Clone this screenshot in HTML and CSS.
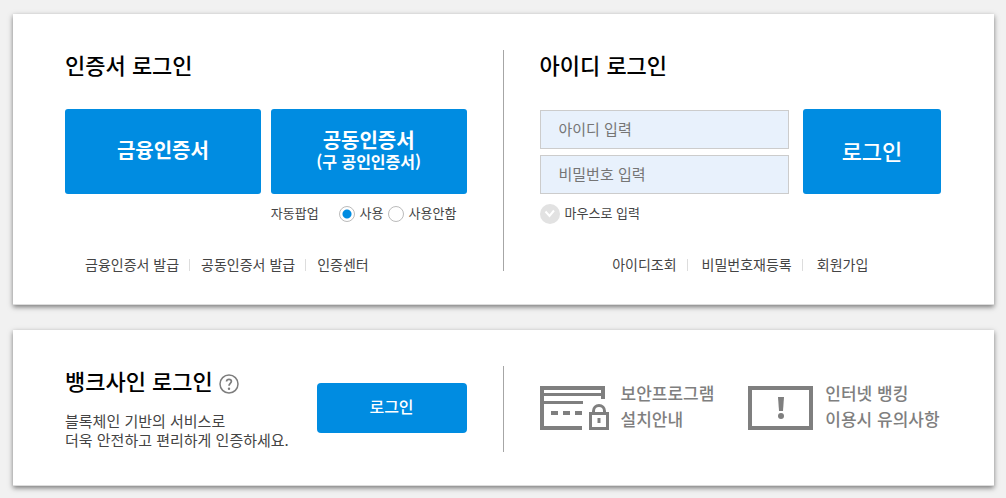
FILE: index.html
```html
<!DOCTYPE html>
<html lang="ko">
<head>
    <meta charset="UTF-8">
    <meta name="viewport" content="width=device-width, initial-scale=1.0">
    <title>로그인</title>
    <link rel="stylesheet" href="styles.css">
</head>
<body>
    <main>
        <div class="card">
            <section class="half">
                <h2>인증서 로그인</h2>
                <div class="cert-buttons">
                    <button type="button" class="btn cert">금융인증서</button>
                    <button type="button" class="btn cert">공동인증서<small>(구 공인인증서)</small></button>
                </div>
                <div class="option popup">
                    <span class="option-title">자동팝업</span>
                    <label><input type="radio" name="popup" checked>사용</label>
                    <label><input type="radio" name="popup">사용안함</label>
                </div>
                <ul class="links">
                    <li><a href="#">금융인증서 발급</a></li>
                    <li><a href="#">공동인증서 발급</a></li>
                    <li><a href="#">인증센터</a></li>
                </ul>
            </section>
            <section class="half">
                <h2>아이디 로그인</h2>
                <form>
                    <div class="login-form">
                        <div class="fields">
                            <input type="text" placeholder="아이디 입력" aria-label="아이디 입력">
                            <input type="password" placeholder="비밀번호 입력" aria-label="비밀번호 입력">
                        </div>
                        <button type="button" class="btn login">로그인</button>
                    </div>
                    <div class="option">
                        <label class="mouse">
                            <input type="checkbox">
                            <svg width="20" height="20" viewBox="0 0 20 20"><circle cx="10" cy="10" r="10" fill="#e2e2e2"/><path d="M5.500 7.500l4 4.500 4.500-5.500" fill="none" stroke="#fff" stroke-width="2"/></svg>
                            마우스로 입력
                        </label>
                    </div>
                </form>
                <ul class="links center">
                    <li><a href="#">아이디조회</a></li>
                    <li><a href="#">비밀번호재등록</a></li>
                    <li><a href="#">회원가입</a></li>
                </ul>
            </section>
        </div>

        <div class="card">
            <section class="half banksign">
                <div>
                    <h2>뱅크사인 로그인
                        <a href="#" class="help" aria-label="도움말">
                            <svg width="20" height="20" viewBox="0 0 20 20" fill="none" stroke="#7d7d7d"><circle cx="10" cy="10" r="9" stroke-width="1.5"/><path d="M7.5 7.5Q7.700 5.300 10 5.300t2.400 2c0 2-2.400 2-2.400 4.500" stroke-width="1.7"/><circle cx="10" cy="14.7" r="1.2" fill="#7d7d7d" stroke="none"/></svg>
                        </a>
                    </h2>
                    <p>블록체인 기반의 서비스로<br>더욱 안전하고 편리하게 인증하세요.</p>
                </div>
                <button type="button" class="btn bank">로그인</button>
            </section>
            <section class="half guides">
                <a href="#">
                    <svg width="69" height="44" viewBox="0 0 69 44" fill="none" stroke="#7f7f7f">
                        <path d="M42 42H2V2h61v11" stroke-width="4"/>
                        <path d="M2 8.500h61" stroke-width="3"/>
                        <path d="M2 16.500h41" stroke-width="3"/>
                        <path d="M11 27h7m5 0h7m5 0h7" stroke-width="4"/>
                        <path d="M53.500 27v-2a5.500 5.500 0 0 1 11 0v2M50.500 27.500h17v15h-17z" stroke-width="3"/>
                        <path d="M59 32v5" stroke-width="3"/>
                    </svg>
                    <span>보안프로그램<br>설치안내</span>
                </a>
                <a href="#">
                    <svg width="65" height="44" viewBox="0 0 65 44">
                        <path d="M2 2h61v40H2z" fill="none" stroke="#7f7f7f" stroke-width="4"/>
                        <path d="M30 11h6l-1 14h-4z" fill="#7f7f7f"/>
                        <circle cx="33" cy="30" r="3" fill="#7f7f7f"/>
                    </svg>
                    <span>인터넷 뱅킹<br>이용시 유의사항</span>
                </a>
            </section>
        </div>
    </main>
</body>
</html>
```
FILE: styles.css
```css
* {
    box-sizing: border-box;
}
body {
    margin: 0;
    padding: 14px 12px 12px 13px;
    background-color: #f1f1f1;
    color: #444;
    font-family: "Noto Sans CJK KR", sans-serif;
}
main {
    display: flex;
    flex-direction: column;
    gap: 25px;
}
a {
    color: inherit;
    text-decoration: none;
}
h2, p, ul {
    margin: 0;
    padding: 0;
}
h2 {
    display: flex;
    align-items: flex-end;
    gap: 6px;
    color: #000;
    font-size: 22px;
    font-weight: 500;
    line-height: 28px;
}
.card {
    display: flex;
    padding: 36px 53px 33px 52px;
    background-color: #fff;
    border-bottom: 1px solid #ddd;
    box-shadow: 0 2px 5px rgba(0, 0, 0, 0.5);
}
.half {
    flex: 1 1 0;
    padding-right: 36px;
}
.half + .half {
    padding-right: 0;
    padding-left: 36px;
    border-left: 1px solid #a6a6a6;
}

/* buttons */
.btn {
    padding: 0 0 3px;
    border: none;
    border-radius: 3px;
    background-color: #008ce1;
    color: #fff;
    font-family: inherit;
    font-weight: 500;
    cursor: pointer;
}
.cert-buttons {
    display: grid;
    grid-template-columns: 1fr 1fr;
    gap: 10px;
    margin-top: 31px;
}
.cert {
    height: 85px;
    font-size: 20px;
    font-weight: 700;
    line-height: 22px;
}
.cert small {
    display: block;
    font-size: 16px;
    line-height: 20px;
}
.login {
    width: 138px;
    height: 85px;
    font-size: 22px;
}
.bank {
    width: 150px;
    height: 50px;
    border-radius: 4px;
    font-size: 16px;
}

/* id / password */
.login-form {
    display: flex;
    gap: 14px;
    margin-top: 31px;
}
.fields {
    flex: 1;
    display: flex;
    flex-direction: column;
    justify-content: flex-end;
    gap: 6px;
}
.fields input {
    width: 100%;
    height: 39px;
    padding: 0 18px 2px;
    border: 1px solid #ccc;
    background-color: #e8f1fc;
    font-family: inherit;
    font-size: 15px;
}
.fields input::placeholder {
    color: #757575;
}

/* radio, checkbox */
.option {
    display: flex;
    align-items: center;
    height: 20px;
    margin-top: 8px;
    font-size: 13px;
}
.option label {
    display: flex;
    align-items: center;
    gap: 5px;
    margin-right: 4px;
}
.popup {
    padding-left: calc(50% + 5px);
}
.option-title {
    margin-right: 20px;
}
.option input[type="radio"] {
    appearance: none;
    width: 16px;
    height: 16px;
    margin: 4px 0 0;
    border: 1px solid #bbb;
    border-radius: 50%;
}
.option input[type="radio"]:checked {
    background: radial-gradient(circle, #008ce1 4px, #fff 5px);
}
.mouse input {
    appearance: none;
    position: absolute;
    margin: 0;
}
.mouse svg {
    margin-top: 4px;
}
.mouse input:checked + svg circle {
    fill: #008ce1;
}

.links {
    display: flex;
    margin-top: 35px;
    padding-left: 20px;
    list-style: none;
    font-size: 14px;
    line-height: 14px;
}
.links li + li {
    margin-left: 10px;
    padding-left: 12px;
    background: linear-gradient(#ddd, #ddd) left bottom / 1px 12px no-repeat;
}
.links.center {
    justify-content: center;
    padding-left: 0;
}
.links.center li + li {
    padding-left: 15px;
}

/* bottom card */
.banksign,
.guides {
    display: flex;
    align-items: center;
    padding-bottom: 3px;
}
.banksign {
    justify-content: space-between;
}
.banksign p {
    margin-top: 17px;
    font-size: 15px;
    line-height: 19px;
}
.help {
    display: flex;
}
.guides {
    gap: 34px;
}
.guides a {
    display: flex;
    align-items: center;
    gap: 12px;
    color: #7f7f7f;
    font-size: 17px;
    font-weight: 500;
    line-height: 26px;
    white-space: nowrap;
}
.guides span {
    padding-bottom: 3px;
}
```
